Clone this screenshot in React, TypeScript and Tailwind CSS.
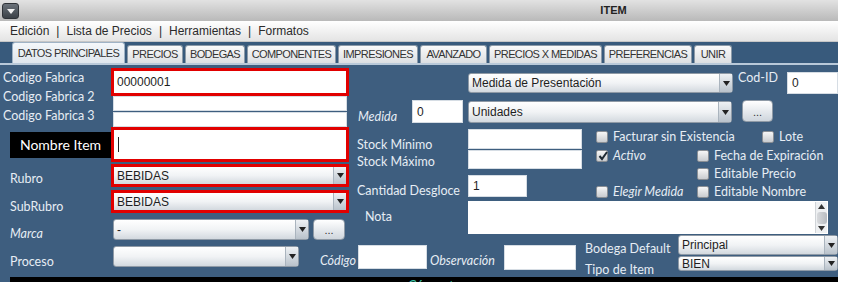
import React from 'react';

const lbl = "font-['Lato',sans-serif] text-[12.5px] leading-[16px] text-[#e6edf4] whitespace-nowrap";
const field = "font-['Liberation_Sans',Arial,sans-serif] text-[12px] text-[#1e1e1e]";

function Arrow() {
  return (
    <svg width="7" height="5" viewBox="0 0 7 5">
      <path d="M0 0 L7 0 L3.5 5 Z" fill="#222" />
    </svg>
  );
}

function Select({ text, className, red }: { text?: string; className: string; red?: boolean }) {
  const body = (
    <div
      className={`flex h-full items-stretch bg-linear-to-b from-white via-[#f1f3f5] to-[#d3d9df] ${
        red ? '' : 'rounded-[3px] border border-[#8f9aa6]'
      }`}
    >
      <div className={`flex flex-1 items-center pl-[3px] ${field} truncate`}>{text}</div>
      <div className="flex w-[13px] items-center justify-center border-l border-[#aab4be] bg-linear-to-b from-[#eef1f4] to-[#b9c2cb]">
        <Arrow />
      </div>
    </div>
  );
  if (red) {
    return <div className={`border-[3px] border-[#e10000] ${className}`}>{body}</div>;
  }
  return <div className={className}>{body}</div>;
}

function Input({ value, className }: { value?: string; className: string }) {
  return (
    <div className={`flex items-center bg-white pl-[4px] border border-[#d6dde4] ${field} ${className}`}>
      {value}
    </div>
  );
}

function Dots({ className }: { className: string }) {
  return (
    <div
      className={`flex items-end justify-center rounded-[4px] border border-[#8f9aa6] bg-linear-to-b from-white to-[#cfd6dd] pb-[3px] text-[11px] leading-none text-[#333] font-['Liberation_Sans',sans-serif] ${className}`}
    >
      ...
    </div>
  );
}

function Check({ checked, label, italic }: { checked?: boolean; label: string; italic?: boolean }) {
  return (
    <div className="flex items-center gap-[5px]">
      <div className="relative h-[12px] w-[12px] rounded-[2px] border border-[#8a8f95] bg-linear-to-b from-[#f6f6f6] to-[#c9ccd0]">
        {checked && (
          <svg className="absolute left-[0px] top-[-1px]" width="12" height="12" viewBox="0 0 12 12">
            <path d="M2.5 6 L5 9 L10 2" stroke="#1f2a33" strokeWidth="2" fill="none" />
          </svg>
        )}
      </div>
      <span className={`${lbl} ${italic ? 'italic' : ''}`}>{label}</span>
    </div>
  );
}

const tabs: [string, string][] = [
  ['DATOS PRINCIPALES', 'w-[113px]'],
  ['PRECIOS', 'w-[56px]'],
  ['BODEGAS', 'w-[60px]'],
  ['COMPONENTES', 'w-[89px]'],
  ['IMPRESIONES', 'w-[80px]'],
  ['AVANZADO', 'w-[67px]'],
  ['PRECIOS X MEDIDAS', 'w-[113px]'],
  ['PREFERENCIAS', 'w-[88px]'],
  ['UNIR', 'w-[38px]'],
];

export default function App() {
  return (
    <div className="h-[284px] w-[841px] overflow-hidden bg-white">
      <div className="w-[838px]">
        {/* Title bar */}
        <div className="flex h-[21px] items-start bg-linear-to-b from-[#e2e2e2] to-[#b9b9b9]">
          <div className="ml-[2px] mt-[3px] flex h-[16px] w-[17px] items-center justify-center rounded-[3px] border border-[#2f3338] bg-linear-to-b from-[#6b727a] to-[#3c4248]">
            <svg width="8" height="5" viewBox="0 0 8 5">
              <path d="M0 0 L8 0 L4 5 Z" fill="#f2f2f2" />
            </svg>
          </div>
          <div className="flex-1 self-center pl-[370px] text-center font-['Liberation_Sans',sans-serif] text-[11px] font-bold text-[#222]">
            ITEM
          </div>
        </div>

        {/* Menu */}
        <div className="flex h-[21px] items-center gap-[7px] border-b border-[#c6c6c6] bg-linear-to-b from-white to-[#e4e4e4] pl-[10px] font-['Liberation_Sans',sans-serif] text-[12px] text-[#2b2b2b]">
          <span>Edición</span>
          <span>|</span>
          <span>Lista de Precios</span>
          <span>|</span>
          <span>Herramientas</span>
          <span>|</span>
          <span>Formatos</span>
        </div>

        {/* Tabs */}
        <div className="flex h-[23px] items-end gap-[2px] border-b-2 border-[#b9c9d9] bg-[#385a7c] pl-[12px]">
          {tabs.map(([t, w], i) => (
            <div
              key={t}
              className={`${w} flex items-center justify-center rounded-t-[3px] border border-b-0 font-['Liberation_Sans',sans-serif] text-[11px] tracking-[-0.6px] text-[#333] ${
                i === 0
                  ? 'h-[21px] border-[#9fb3c6] bg-linear-to-b from-[#f4f7fa] to-[#dfe6ed]'
                  : 'h-[18px] border-[#8c9aa8] bg-linear-to-b from-[#fafafa] to-[#dcdfe2]'
              }`}
            >
              {t}
            </div>
          ))}
        </div>

        {/* Panel */}
        <div className="h-[212px] bg-[#3e5e7f]">
          <div className="flex">
            {/* Left column */}
            <div className="w-[355px] pt-[3px]">
              <div className="flex">
                <div className={`${lbl} w-[111px] pl-[3px] leading-[19px]`}>
                  <div>Codigo Fabrica</div>
                  <div>Codigo Fabrica 2</div>
                  <div>Codigo Fabrica 3</div>
                </div>
                <div className="w-[238px]">
                  <div className="h-[28px] border-[3px] border-[#e10000]">
                    <div className={`flex h-full items-center bg-white pl-[3px] ${field}`}>00000001</div>
                  </div>
                  <Input className="mx-[2px] h-[15px]" />
                  <Input className="mx-[2px] mt-[1px] h-[15px]" />
                </div>
              </div>
              <div className="flex h-[35px] items-center">
                <div className="ml-[10px] flex h-[26px] w-[101px] items-center justify-center bg-black font-['Lato',sans-serif] text-[14px] text-white">
                  Nombre Item
                </div>
                <div className="h-[35px] w-[238px] border-[3px] border-[#e10000]">
                  <div className="flex h-full items-center bg-white pl-[4px]">
                    <div className="h-[15px] w-[1px] bg-[#222]" />
                  </div>
                </div>
              </div>
              <div className="mt-[2px] flex h-[23px] items-start">
                <div className={`${lbl} mt-[7px] w-[111px] pl-[10px]`}>Rubro</div>
                <Select red text="BEBIDAS" className="h-[23px] w-[238px]" />
              </div>
              <div className="mt-[3px] flex h-[23px] items-start">
                <div className={`${lbl} mt-[9px] w-[111px] pl-[10px]`}>SubRubro</div>
                <Select red text="BEBIDAS" className="h-[23px] w-[238px]" />
              </div>
              <div className="mt-[6px] flex h-[21px] items-start">
                <div className={`${lbl} mt-[7px] w-[113px] pl-[10px] italic`}>Marca</div>
                <Select text="-" className="h-[21px] w-[196px]" />
                <Dots className="ml-[4px] h-[21px] w-[32px]" />
              </div>
            </div>

            {/* Right column */}
            <div className="flex-1 pt-[5px]">
              <div className="flex items-start pl-[113px]">
                <Select text="Medida de Presentación" className="mt-[3px] h-[20px] w-[265px]" />
                <div className={`${lbl} ml-[5px] w-[49px]`}>Cod-ID</div>
                <Input value="0" className="mt-[2px] h-[22px] w-[51px]" />
              </div>
              <div className="mt-[6px] flex items-start">
                <div className={`${lbl} mt-[9px] w-[57px] pl-[3px] italic`}>Medida</div>
                <Input value="0" className="h-[23px] w-[51px]" />
                <Select text="Unidades" className="ml-[5px] mt-[1px] h-[22px] w-[264px]" />
                <Dots className="ml-[10px] h-[22px] w-[31px]" />
              </div>
              <div className="mt-[4px] flex items-start">
                <div className="w-[113px] pl-[2px] pt-[8px]">
                  <div className={`${lbl} h-[17px]`}>Stock Mínimo</div>
                  <div className={`${lbl} h-[17px]`}>Stock Máximo</div>
                  <div className={`${lbl} mt-[12px] h-[17px]`}>Cantidad Desgloce</div>
                </div>
                <div className="w-[128px]">
                  <Input className="h-[20px] w-[114px]" />
                  <Input className="mt-[1px] h-[19px] w-[114px]" />
                  <Input value="1" className="mt-[6px] h-[22px] w-[59px]" />
                </div>
                <div className="-mt-[2px]">
                  <div className="flex h-[19px] items-center">
                    <div className="w-[166px]">
                      <Check label="Facturar sin Existencia" />
                    </div>
                    <Check label="Lote" />
                  </div>
                  <div className="flex h-[19px] items-center">
                    <div className="w-[101px]">
                      <Check checked italic label="Activo" />
                    </div>
                    <Check label="Fecha de Expiración" />
                  </div>
                  <div className="flex h-[18px] items-center pl-[101px]">
                    <Check label="Editable Precio" />
                  </div>
                  <div className="flex h-[17px] items-center">
                    <div className="w-[101px]">
                      <Check italic label="Elegir Medida" />
                    </div>
                    <Check label="Editable Nombre" />
                  </div>
                </div>
              </div>
              <div className="mt-[1px] flex items-start">
                <div className={`${lbl} mt-[8px] w-[113px] pl-[10px]`}>Nota</div>
                <div className="flex h-[33px] w-[360px] justify-end bg-white">
                  <div className="my-[1px] mr-[1px] flex w-[12px] flex-col items-center justify-between border-l border-[#d0d4d8] bg-[#eef0f2]">
                    <svg width="7" height="5" viewBox="0 0 7 5" className="mt-[2px]">
                      <path d="M0 5 L7 5 L3.5 0 Z" fill="#333" />
                    </svg>
                    <div className="h-[12px] w-[10px] rounded-[3px] bg-linear-to-r from-[#d8dadd] to-[#b8bcc1]" />
                    <svg width="7" height="5" viewBox="0 0 7 5" className="mb-[2px]">
                      <path d="M0 0 L7 0 L3.5 5 Z" fill="#333" />
                    </svg>
                  </div>
                </div>
              </div>
            </div>
          </div>

          {/* Bottom row */}
          <div className="flex h-[37px] items-start pl-[10px]">
            <div className={`${lbl} mt-[14px] w-[103px]`}>Proceso</div>
            <Select className="mt-[6px] h-[21px] w-[186px]" />
            <div className={`${lbl} ml-[21px] mt-[13px] w-[38px] italic`}>Código</div>
            <Input className="mt-[5px] h-[24px] w-[69px]" />
            <div className={`${lbl} ml-[3px] mt-[13px] w-[68px] italic`}>Observación</div>
            <Input className="ml-[6px] mt-[5px] h-[25px] w-[72px]" />
            <div className="-mt-[5px] ml-[9px] flex">
              <div className="w-[93px] pt-[6px]">
                <div className={`${lbl} h-[21px]`}>Bodega Default</div>
                <div className={`${lbl} h-[21px]`}>Tipo de Item</div>
              </div>
              <div>
                <Select text="Principal" className="h-[20px] w-[160px]" />
                <Select text="BIEN" className="mt-[1px] h-[15px] w-[160px]" />
              </div>
            </div>
          </div>
        </div>

        {/* Bottom strip */}
        <div className="flex h-[5px] bg-[#3e5e7f]">
          <div className="w-[10px]" />
          <div className="flex-1 overflow-hidden bg-black pl-[398px] pt-[2px] font-['Lato',sans-serif] text-[13px] leading-none text-[#3cc6a8]">
            Cómputo
          </div>
        </div>
      </div>
    </div>
  );
}
